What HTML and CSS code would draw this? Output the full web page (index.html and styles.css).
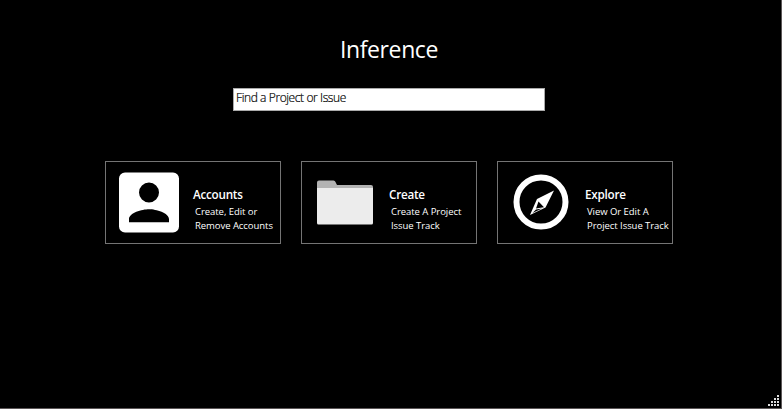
FILE: index.html
```
<!DOCTYPE html>
<html lang="en">
<head>
<meta charset="utf-8">
<title>Inference</title>
<link rel="stylesheet" href="styles.css">
</head>
<body>
<main class="window">
  <h1 class="title">Inference</h1>
  <input class="search" type="text" value="Find a Project or Issue" aria-label="Search">
  <div class="cards">
    <a class="card">
      <svg class="icon" viewBox="0 0 64 64"><path fill="#fff" fill-rule="evenodd" d="M8 2.500h48a6 6 0 0 1 6 6v48a6 6 0 0 1-6 6H8a6 6 0 0 1-6-6v-48a6 6 0 0 1 6-6zM32 12.500a10 10 0 1 0 0 20 10 10 0 0 0 0-20zM12 52.300h40v-3c0-6.500-13-10-20-10s-20 3.500-20 10z"/></svg>
      <div class="text"><h2 class="name">Accounts</h2><p class="line">Create, Edit or</p><p class="line">Remove Accounts</p></div>
    </a>
    <a class="card">
      <svg class="icon" viewBox="0 0 64 64"><path fill="#b3b3b3" d="M6 10.500h14.500q1.500 0 2 1.500l1.500 3H58q2 0 2 2V22H4v-9.500q0-2 2-2z"/><path fill="#ececec" d="M4 18h56v35q0 1.500-1.500 1.500h-53Q4 54.500 4 53z"/></svg>
      <div class="text"><h2 class="name">Create</h2><p class="line">Create A Project</p><p class="line">Issue Track</p></div>
    </a>
    <a class="card">
      <svg class="icon" viewBox="0 0 64 64"><circle cx="32" cy="32" r="24.500" fill="none" stroke="#fff" stroke-width="6"/><path fill="#fff" fill-rule="evenodd" d="M45 20.500 36.500 37.500 21 45 28 29zM29.500 31.500 27 38.500l3-.5 5-.7zM27 39.500 23.500 43l9.500-4.500z"/></svg>
      <div class="text"><h2 class="name">Explore</h2><p class="line">View Or Edit A</p><p class="line">Project Issue Track</p></div>
    </a>
  </div>
  <svg class="grip" viewBox="0 0 12 12" shape-rendering="crispEdges"><path fill="#ddd" d="M9 0h2v2H9zM6 3h2v2H6zM9 3h2v2H9zM3 6h2v2H3zM6 6h2v2H6zM9 6h2v2H9zM0 9h2v2H0zM3 9h2v2H3zM6 9h2v2H6zM9 9h2v2H9z"/></svg>
</main>
</body>
</html>
```
FILE: styles.css
```
* { box-sizing: border-box; }
body { margin: 0; background: #000; color: #fff; font-family: "Open Sans", "Noto Sans", sans-serif; }
.window { position: relative; width: 782px; height: 409px; border-right: 1px solid #5c5758; border-bottom: 1px solid #5c5758; padding-top: 33px; display: flex; flex-direction: column; align-items: center; overflow: hidden; }
.title { margin: 0; padding-right: 3px; height: 32px; line-height: 32px; font-size: 23px; font-weight: 400; letter-spacing: -0.4px; }
.search { margin: 23px 3px 0 0; width: 312px; height: 23px; border: 1px solid #aaa; border-radius: 0; background: #fff; padding: 0 2px 4px; font: 300 12px "Open Sans", sans-serif; letter-spacing: -0.4px; color: #000; -webkit-text-stroke: 0.2px #000; outline: 0; }
.cards { display: flex; gap: 20px; margin: 50px 3px 0 0; }
.card { display: flex; width: 176px; height: 83px; border: 1px solid #747474; padding: 8px 0 0 11px; }
.icon { flex: none; width: 64px; height: 64px; }
.text { padding: 16px 0 0 12px; white-space: nowrap; }
.name { margin: 0; height: 19px; line-height: 17px; font-size: 11.7px; font-weight: 600; letter-spacing: -0.25px; }
.line { margin: 0 0 0 2px; height: 14px; line-height: 14px; font-size: 9.5px; letter-spacing: -0.05px; }
.grip { position: absolute; right: 1px; bottom: 1px; width: 12px; height: 12px; }
```
